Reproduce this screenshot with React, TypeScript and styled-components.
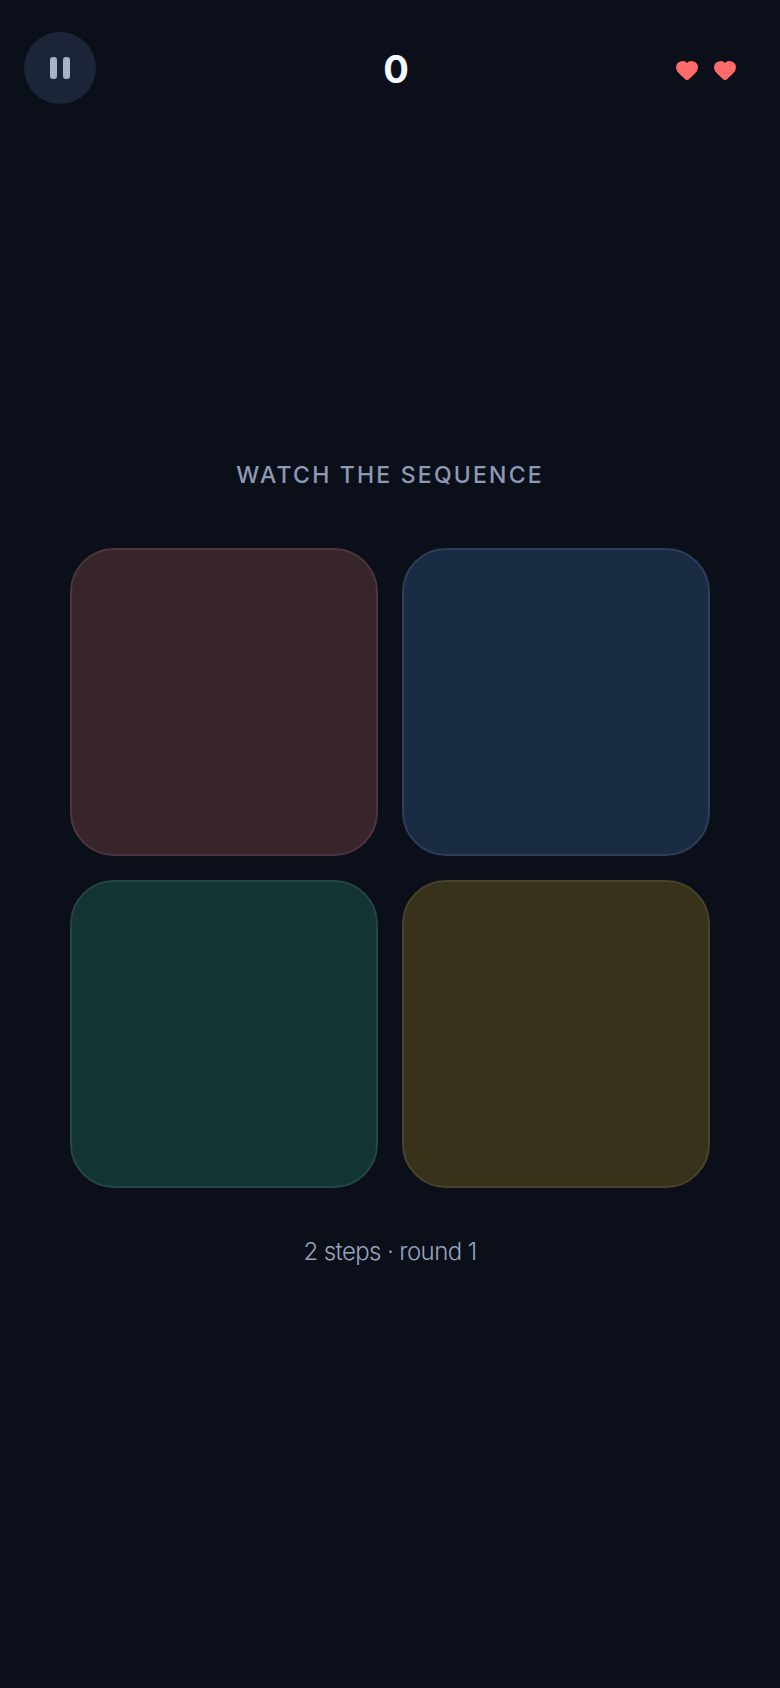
import React from 'react';
import styled, { createGlobalStyle } from 'styled-components';
import { Heart } from 'lucide-react';

const GlobalStyle = createGlobalStyle`
  html, body {
    margin: 0;
    padding: 0;
    background: #0b0f1a;
  }
  * {
    box-sizing: border-box;
  }
`;

const Screen = styled.div`
  width: 780px;
  height: 1688px;
  background: #0b0f1a;
  font-family: Inter, "Noto Sans", sans-serif;
  overflow: hidden;
`;

const TopBar = styled.header`
  display: grid;
  grid-template-columns: 1fr auto 1fr;
  align-items: center;
  padding: 32px 12px 0 24px;
`;

const PauseButton = styled.button`
  width: 72px;
  height: 72px;
  border: none;
  border-radius: 50%;
  background: #1c2438;
  display: flex;
  align-items: center;
  justify-content: center;
  gap: 6px;
  padding: 0;
`;

const PauseBar = styled.span`
  width: 7px;
  height: 22px;
  border-radius: 3px;
  background: #a8b2c9;
`;

const Score = styled.div`
  padding-top: 2px;
  font-size: 38px;
  font-weight: 700;
  color: #f5f8ff;
  line-height: 44px;
`;

const Lives = styled.div`
  justify-self: end;
  display: flex;
  gap: 14px;
  padding: 4px 31px 0 0;
  color: #ff6b6b;
`;

const Board = styled.main`
  display: flex;
  flex-direction: column;
  align-items: center;
  padding-top: 356px;
`;

const Prompt = styled.div`
  font-size: 23px;
  line-height: 30px;
  font-weight: 500;
  letter-spacing: 2.2px;
  color: #8e99b3;
`;

const PadGrid = styled.div`
  display: grid;
  grid-template-columns: repeat(2, 308px);
  gap: 24px;
  margin-top: 58px;
`;

const Pad = styled.div<{ $fill: string; $edge: string }>`
  height: 308px;
  border-radius: 44px;
  background: ${props => props.$fill};
  border: 2px solid ${props => props.$edge};
`;

const Steps = styled.div`
  margin-top: 48px;
  font-size: 24px;
  line-height: 32px;
  font-weight: 300;
  letter-spacing: -0.6px;
  color: #98a3bd;
`;

const pads = [
  { fill: '#38242b', edge: '#4c363e' },
  { fill: '#1a2c44', edge: '#2c3e58' },
  { fill: '#123432', edge: '#254644' },
  { fill: '#38321b', edge: '#4a432c' },
];

export default function App() {
  return (
    <Screen>
      <GlobalStyle />
      <TopBar>
        <PauseButton aria-label="Pause">
          <PauseBar />
          <PauseBar />
        </PauseButton>
        <Score>0</Score>
        <Lives>
          <Heart size={24} fill="currentColor" />
          <Heart size={24} fill="currentColor" />
        </Lives>
      </TopBar>
      <Board>
        <Prompt>WATCH THE SEQUENCE</Prompt>
        <PadGrid>
          {pads.map((pad) => (
            <Pad key={pad.fill} $fill={pad.fill} $edge={pad.edge} />
          ))}
        </PadGrid>
        <Steps>2 steps · round 1</Steps>
      </Board>
    </Screen>
  );
}
